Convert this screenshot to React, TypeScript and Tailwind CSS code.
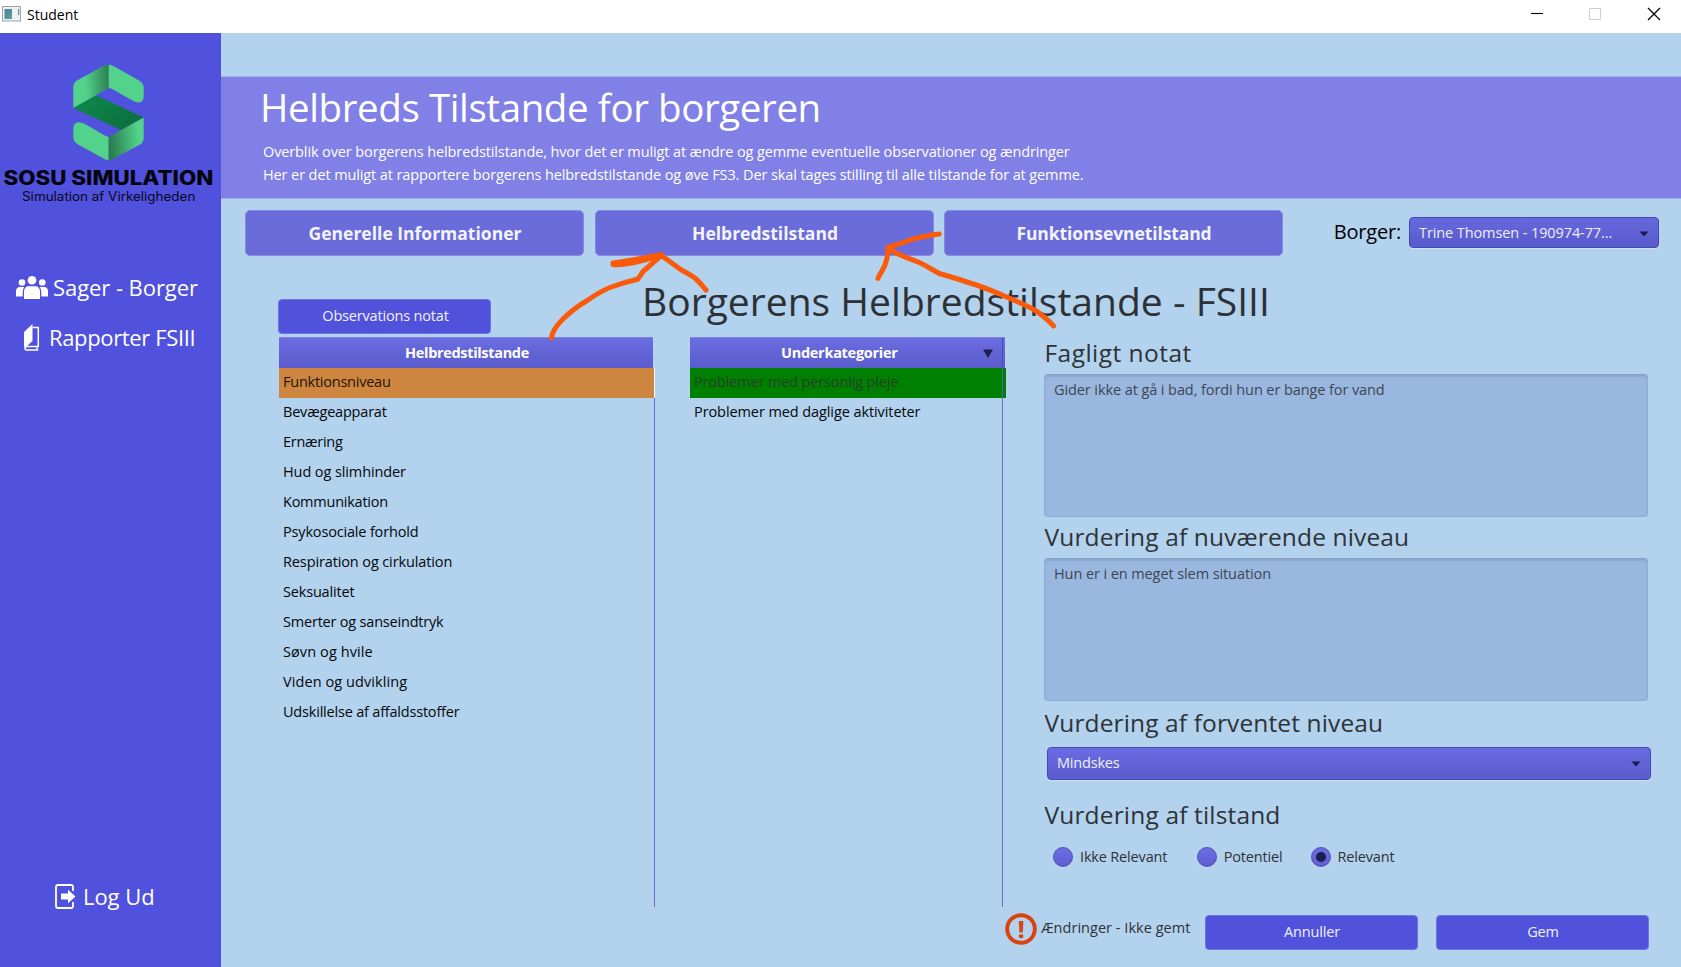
import React from "react";

const conditions = [
  { name: "Funktionsniveau", track: "tracking-[-0.24px]" },
  { name: "Bevægeapparat", track: "tracking-[-0.2px]" },
  { name: "Ernæring", track: "tracking-[-0.28px]" },
  { name: "Hud og slimhinder", track: "tracking-[-0.1px]" },
  { name: "Kommunikation", track: "tracking-[-0.24px]" },
  { name: "Psykosociale forhold", track: "tracking-[-0.17px]" },
  { name: "Respiration og cirkulation", track: "tracking-[-0.12px]" },
  { name: "Seksualitet", track: "tracking-[-0.18px]" },
  { name: "Smerter og sanseindtryk", track: "tracking-[-0.2px]" },
  { name: "Søvn og hvile", track: "tracking-[0.1px]" },
  { name: "Viden og udvikling", track: "tracking-[0.08px]" },
  { name: "Udskillelse af affaldsstoffer", track: "tracking-[-0.2px]" },
];

function Logo() {
  return (
    <svg className="ml-[73px] block" width="72" height="97" viewBox="73 63 72 97">
      <defs>
        <linearGradient id="foldTop" x1="0" x2="1" y1="0.1" y2="0">
          <stop offset="0.3" stopColor="#52d28a" />
          <stop offset="1" stopColor="#2a7d50" />
        </linearGradient>
        <linearGradient id="foldBottom" x1="0" x2="1" y1="0.1" y2="0">
          <stop offset="0" stopColor="#2a7d50" />
          <stop offset="0.8" stopColor="#52d28a" />
        </linearGradient>
        <linearGradient id="band" x1="0" x2="1" y1="0" y2="0.4">
          <stop offset="0" stopColor="#0c8a4c" />
          <stop offset="1" stopColor="#0c713f" />
        </linearGradient>
      </defs>
      <path d="M73.3 107 96 94.3 143.7 116.5 121 129Z" fill="url(#band)" />
      <path d="M73.3 107V86Q73.3 82 77 79.5L103 65Q106 63.3 108.7 63.5V87Z" fill="url(#foldTop)" />
      <path d="M108.7 63.5Q111 63.5 113.5 65L139 79.5Q143.7 82 143.7 87V95Q143.7 103 136 101Q134 100.6 132 99.3L113 88.5Q111 87 108.7 87Z" fill="#52d28a" />
      <path d="M108.7 159Q106 159 103.5 157.5L78 143.5Q73.3 141 73.3 136V128Q73.3 120 81 121.5Q83 122 85 123L104 134Q106 135.5 108.7 136Z" fill="#52d28a" />
      <path d="M143.7 116.5V137Q143.7 141 140 143.5L114 157.5Q111 159 108.7 159V136Z" fill="url(#foldBottom)" />
    </svg>
  );
}

function PeopleIcon() {
  return (
    <svg width="32" height="23" viewBox="0 0 32 23" fill="#fff" className="shrink-0">
      <circle cx="16" cy="4.3" r="4.3" />
      <circle cx="6" cy="6.5" r="3.3" />
      <circle cx="26.3" cy="6.5" r="3.3" />
      <path d="M8 23V16Q8 10.2 13 10.2H19Q24 10.2 24 16V23Z" />
      <path d="M0 20.5V15.5Q0 11 4 11H8.2Q6.7 13 6.7 16V20.5Z" />
      <path d="M32 20.5V15.5Q32 11 28 11H23.8Q25.3 13 25.3 16V20.5Z" />
    </svg>
  );
}

function BookIcon() {
  return (
    <svg width="16" height="27" viewBox="0 0 16 27" className="shrink-0">
      <path d="M0 8 8.5 0V17L2 23Q0 24 0 22Z" fill="#fff" />
      <path d="M8.5 3.5H14.3V22.5H3.5Q1 22.5 1 24.3T3.5 26H14.3" fill="none" stroke="#fff" strokeWidth="1.5" />
      <path d="M13 22V26" stroke="#fff" strokeWidth="1.2" />
    </svg>
  );
}

function LogoutIcon() {
  return (
    <svg width="21" height="25" viewBox="0 0 21 25" className="shrink-0">
      <path d="M18 7V3Q18 1 16 1H3Q1 1 1 3V22Q1 24 3 24H16Q18 24 18 22V18" fill="none" stroke="#fff" strokeWidth="1.8" />
      <path d="M6 9.5H13V5.8L20.5 12.5 13 19.3V15.5H6Z" fill="#fff" />
    </svg>
  );
}

function Caret({ className = "" }: { className?: string }) {
  return (
    <svg width="10" height="6" viewBox="0 0 10 6" className={className}>
      <path d="M0.5 0.5H9.5L5 5.5Z" fill="#1d1d50" />
    </svg>
  );
}

function SectionTitle({ children, className = "" }: { children: React.ReactNode; className?: string }) {
  return (
    <h3 className={`h-[30px] whitespace-nowrap pl-[0.5px] text-[24.5px] leading-[32px] text-[#2f3338] ${className}`}>{children}</h3>
  );
}

function Note({ children }: { children: React.ReactNode }) {
  return (
    <div className="mt-[7px] h-[143px] w-[604px] rounded-[4px] border border-[#8eacd2] border-t-[#849fc4] bg-[#9ab8df] px-[9px] pt-[2px] text-[14.5px] leading-[26px] tracking-[-0.09px] text-[#3c4654] shadow-[inset_0_2px_2px_rgba(90,115,155,0.22)]">
      {children}
    </div>
  );
}

function Tab({ children, className = "" }: { children: React.ReactNode; className?: string }) {
  return (
    <button className={`h-[46px] w-[339px] rounded-[5px] border border-[#8689e6] bg-[#6a6cda] pl-[1px] text-[17.5px] font-bold text-[#f3f3fd] ${className}`}>
      {children}
    </button>
  );
}

function Radio({ label, checked, className = "" }: { label: string; checked?: boolean; className?: string }) {
  return (
    <label className={`flex h-5 items-center gap-[7px] whitespace-nowrap text-[14.5px] leading-5 tracking-[-0.17px] text-[#2f3338] ${className}`}>
      <span className="flex size-5 items-center justify-center rounded-full border border-[#4d4fb4] bg-linear-to-b from-[#6c6ee2] to-[#5d5fd2] shadow-[0_1px_0_rgba(215,232,248,0.6)]">
        {checked && <span className="size-[10px] rounded-full bg-[#1d1d50]" />}
      </span>
      {label}
    </label>
  );
}

function ActionButton({ children }: { children: React.ReactNode }) {
  return (
    <button className="h-[35px] w-[213px] rounded-[4px] border border-[#7074e0] bg-[#5152dc] pb-[2px] pl-[2px] text-[14.5px] tracking-[-0.18px] text-[#f0f0fd]">
      {children}
    </button>
  );
}

function HandDrawnArrows() {
  return (
    <svg
      className="pointer-events-none absolute left-0 top-0"
      width="1681"
      height="967"
      fill="none"
      stroke="#fb5a0a"
      strokeWidth="5"
      strokeLinecap="round"
      strokeLinejoin="round"
    >
      <path d="M551.4 338C552 332 556 326 563 319C571 311 578 306 586.4 301C595 295 603 290 611.4 287C622 283 630 281 637.5 279.3C640 277 641 274 643.6 271L660.7 256" />
      <path d="M613 264.5C620 265.5 627 264 632 263C643 260.5 653 257.5 661.4 255.5L681 269.8C688 273.5 692 275.5 695.4 278.5C699 281.5 703 286.5 706 290" />
      <path d="M613 263C630 261 648 257 661 254.5" />
      <path d="M1053.6 326C1047 319 1040 313 1032.9 309C1023 304 1014 300 1004.3 296C993 291 980 286 968.6 282.5C958 279 948 276 939.3 273.5C931 269 925 265 918.6 262.3C911 259 904 257 897 253.5L888 248" />
      <path d="M939.3 234C929 235.5 920 237 911.4 239.5C903 243 896 245 888 247.3C888 254 887 260 884.6 266C882 271 880 274 877.9 278.3" />
    </svg>
  );
}

export default function App() {
  return (
    <div className="relative flex h-[967px] w-[1681px] flex-col overflow-hidden bg-[#b2d2ed] font-['Open_Sans',sans-serif] text-black">
      <header className="flex h-[33px] shrink-0 items-start bg-white">
        <svg width="20" height="16" viewBox="0 0 20 16" className="ml-[2px] mt-[6px]">
          <defs>
            <linearGradient id="appIcon" x1="0" y1="0" x2="1" y2="1">
              <stop offset="0" stopColor="#4a7fb5" />
              <stop offset="1" stopColor="#5ba486" />
            </linearGradient>
          </defs>
          <rect x="0.5" y="0.5" width="18" height="14.5" fill="#eef1f2" stroke="#9fa5a8" />
          <rect x="2.5" y="3" width="7.5" height="10" fill="url(#appIcon)" />
          <rect x="16" y="3" width="1.2" height="6" fill="#5a9a90" />
        </svg>
        <span className="ml-[5px] text-[14px] leading-[29px]">Student</span>
        <svg className="ml-auto mr-[20px] mt-[7px]" width="131" height="14" viewBox="0 0 131 14" fill="none">
          <path d="M1 6.5H13" stroke="#000" strokeWidth="1.1" />
          <rect x="59.5" y="1.5" width="11" height="11" rx="0.5" stroke="#cccccc" />
          <path d="M118 1 130 13M130 1 118 13" stroke="#000" strokeWidth="1.3" />
        </svg>
      </header>

      <div className="flex min-h-0 flex-1">
        <aside className="flex w-[221px] shrink-0 flex-col bg-[#5051dc] pt-[31px] text-[22px] leading-[30px] text-white">
          <Logo />
          <div className="mt-[5px] h-[24px] w-[183px] origin-left scale-x-[1.145] whitespace-nowrap pl-[3px] font-['Inter',sans-serif] text-[19.5px] font-extrabold leading-[24px] text-[#04040f]">
            SOSU SIMULATION
          </div>
          <div className="ml-[22px] h-[16px] w-[162px] origin-left scale-x-[1.075] whitespace-nowrap font-['Inter',sans-serif] text-[12.5px] leading-[13px] text-[#08081e]">
            Simulation af Virkeligheden
          </div>
          <nav className="mt-[66px] flex flex-col">
            <a className="flex h-[30px] items-center whitespace-nowrap pl-[16px] tracking-[-0.06px]">
              <PeopleIcon />
              <span className="ml-[5px]">Sager - Borger</span>
            </a>
            <a className="mt-[20px] flex h-[30px] items-center whitespace-nowrap pl-[24px] tracking-[-0.36px]">
              <BookIcon />
              <span className="ml-[9px]">Rapporter FSIII</span>
            </a>
          </nav>
          <a className="mb-[56px] mt-auto flex h-[30px] items-center whitespace-nowrap pl-[55px] tracking-[-0.05px]">
            <LogoutIcon />
            <span className="ml-[7px]">Log Ud</span>
          </a>
        </aside>

        <main className="flex min-w-0 flex-1 flex-col">
          <section className="mt-[43px] h-[123px] shrink-0 border-y border-[#a4abea] bg-[#8080e6] pl-[39px] text-white">
            <h1 className="h-[60px] whitespace-nowrap text-[38.5px] leading-[60px] tracking-[-0.4px]">Helbreds Tilstande for borgeren</h1>
            <p className="ml-[3px] mt-[3px] whitespace-nowrap text-[14.5px] leading-[23px] tracking-[-0.12px]">
              Overblik over borgerens helbredstilstande, hvor det er muligt at ændre og gemme eventuelle observationer og ændringer
              <br />
              <span className="tracking-[-0.107px]">
                Her er det muligt at rapportere borgerens helbredstilstande og øve FS3. Der skal tages stilling til alle tilstande for at gemme.
              </span>
            </p>
          </section>

          <div className="mt-[11px] flex h-[46px] shrink-0 items-center pl-[24px] pr-[22px]">
            <Tab>Generelle Informationer</Tab>
            <Tab className="ml-[11px]">Helbredstilstand</Tab>
            <Tab className="ml-[10px] tracking-[-0.1px]">Funktionsevnetilstand</Tab>
            <span className="ml-auto pb-[3px] text-[20px] leading-[28px] tracking-[-0.2px]">Borger:</span>
            <div className="mb-[1px] ml-[8px] flex h-[31px] w-[250px] items-center rounded-[4px] border border-[#4547b0] bg-linear-to-b from-[#6668de] to-[#595bcb] pl-[9px] pr-[9px] text-[14.5px] tracking-[-0.1px] text-[#eeeefc] shadow-[0_1px_0_rgba(215,232,248,0.7)]">
              Trine Thomsen - 190974-77...
              <Caret className="ml-auto mt-[2px]" />
            </div>
          </div>

          <div className="mt-[15px] flex h-[66px] shrink-0 pl-[57px]">
            <div className="pt-[28px]">
              <ActionButton>Observations notat</ActionButton>
            </div>
            <h2 className="ml-[151px] h-[60px] whitespace-nowrap text-[39px] leading-[60px] tracking-[0.02px] text-[#2d3135]">
              Borgerens Helbredstilstande - FSIII
            </h2>
          </div>

          <div className="flex h-[570px] shrink-0 pl-[58px]">
            <section className="flex w-[376px] flex-col text-[14.5px]">
              <div className="h-[31px] w-[374px] border-t border-[#7f83e4] bg-linear-to-b from-[#6a6ce0] to-[#5a5ccc] pl-[2px] text-center font-bold leading-[30px] tracking-[-0.33px] text-white">
                Helbredstilstande
              </div>
              <ul className="flex-1 border-r border-[#6a6cd8]">
                {conditions.map((c, i) => (
                  <li
                    key={c.name}
                    className={`h-[30px] whitespace-nowrap pl-[4px] leading-[27px] ${c.track} ${
                      i === 0 ? "-mr-px border-r border-white bg-[#cd853f] text-[#241505]" : "text-[#06080a]"
                    }`}
                  >
                    {c.name}
                  </li>
                ))}
              </ul>
            </section>

            <section className="ml-[35px] flex w-[316px] flex-col text-[14.5px]">
              <div className="flex h-[31px] w-[315px] border-t border-[#7f83e4] bg-linear-to-b from-[#6a6ce0] to-[#5a5ccc] font-bold leading-[28px] tracking-[-0.28px] text-white">
                <div className="flex w-[313px] items-center border-r border-[#4c4eb8]">
                  <span className="ml-[91px]">Underkategorier</span>
                  <svg width="10" height="9" viewBox="0 0 10 9" className="ml-auto mr-[9px]">
                    <path d="M0 0.5H10L5 9Z" fill="#1d1d50" />
                  </svg>
                </div>
              </div>
              <div className="h-[30px] bg-[#008000]">
                <div className="h-[30px] w-[313px] whitespace-nowrap border-r border-[#4a5fb0] pl-[4px] leading-[27px] tracking-[-0.14px] text-[#26402a]">
                  Problemer med personlig pleje
                </div>
              </div>
              <div className="w-[313px] flex-1 whitespace-nowrap border-r border-[#6a6cd8] pl-[4px] leading-[27px] tracking-[-0.09px] text-[#06080a]">
                Problemer med daglige aktiviteter
              </div>
            </section>

            <section className="ml-[38px] flex flex-col">
              <SectionTitle className="tracking-[0.46px]">Fagligt notat</SectionTitle>
              <Note>Gider ikke at gå i bad, fordi hun er bange for vand</Note>
              <SectionTitle className="mt-[4px] tracking-[0.14px]">Vurdering af nuværende niveau</SectionTitle>
              <Note>Hun er i en meget slem situation</Note>
              <SectionTitle className="mt-[6px] tracking-[0.13px]">Vurdering af forventet niveau</SectionTitle>
              <div className="ml-[3px] mt-[10px] flex h-[33px] w-[604px] items-center rounded-[4px] border border-[#4547b0] bg-linear-to-b from-[#6a6ce2] to-[#5a5ccd] pb-[1px] pl-[9px] pr-[9px] text-[14.5px] tracking-[-0.2px] text-[#f0f0fd] shadow-[0_1px_0_rgba(215,232,248,0.7)]">
                Mindskes
                <Caret className="ml-auto mt-[2px]" />
              </div>
              <SectionTitle className="mt-[19px] tracking-[0.16px]">Vurdering af tilstand</SectionTitle>
              <div className="mt-[18px] flex pl-[9px]">
                <Radio label="Ikke Relevant" />
                <Radio label="Potentiel" className="ml-[29.5px]" />
                <Radio label="Relevant" checked className="ml-[28px]" />
              </div>
            </section>
          </div>

          <footer className="mt-[4px] flex h-[40px] shrink-0 items-start pl-[784px]">
            <svg width="32" height="32" viewBox="0 0 32 32" className="mt-[2px]">
              <circle cx="16" cy="16" r="13.8" fill="none" stroke="#d8430f" strokeWidth="3.9" />
              <path d="M13.8 8H18.4L17.8 19.5H14.4Z" fill="#d8430f" />
              <rect x="14" y="21.5" width="4.2" height="3.5" fill="#d8430f" />
            </svg>
            <span className="ml-[4px] mt-[5px] whitespace-nowrap text-[14.5px] leading-[23px] tracking-[0.03px] text-[#2f3338]">
              Ændringer - Ikke gemt
            </span>
            <div className="ml-auto mr-[32.5px] mt-[4px] flex gap-[18px]">
              <ActionButton>Annuller</ActionButton>
              <ActionButton>Gem</ActionButton>
            </div>
          </footer>
        </main>
      </div>
      <HandDrawnArrows />
    </div>
  );
}
